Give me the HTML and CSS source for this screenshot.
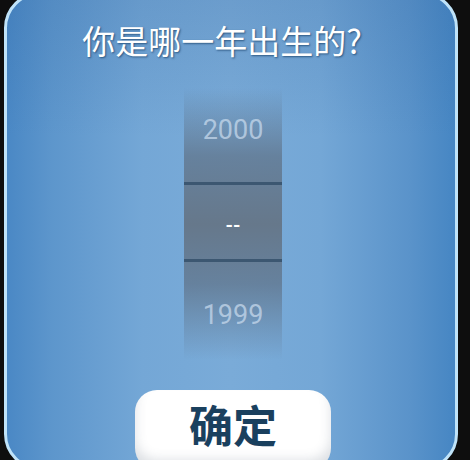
FILE: index.html
```html
<!DOCTYPE html>
<html lang="zh">
<head>
<meta charset="utf-8">
<title>出生年份</title>
<link rel="stylesheet" href="styles.css">
</head>
<body>
<div class="dialog">
  <h1 class="title">你是哪一年出生的?</h1>
  <div class="picker">
    <div class="item item-prev">2000</div>
    <div class="item item-current">--</div>
    <div class="item item-next">1999</div>
  </div>
  <button class="confirm">确定</button>
</div>
</body>
</html>
```

FILE: styles.css
```css
html, body {
  margin: 0;
  padding: 0;
  height: 100%;
  overflow: hidden;
  background: #0e0e0e;
}

.dialog {
  box-sizing: border-box;
  width: 454px;
  height: 478px;
  margin: -8px 0 0 4px;
  border: 3px solid #bfe3f9;
  border-radius: 36px;
  overflow: hidden;
  background:
    linear-gradient(180deg, rgba(40, 90, 150, 0.18) 0%, rgba(40, 90, 150, 0) 30%),
    linear-gradient(90deg, #4a88c5 0%, #5d96cc 10%, #74a7d6 30%, #7aabd8 50%, #74a7d6 70%, #5a93ca 90%, #4686c3 100%);
  display: flex;
  flex-direction: column;
  align-items: center;
  font-family: "Noto Sans CJK SC", "Noto Sans", sans-serif;
}

.title {
  margin: 22px 18px 0 0;
  font-size: 33px;
  font-weight: 400;
  line-height: 46px;
  color: #ffffff;
  text-shadow: 1px 1px 2px rgba(0, 40, 80, 0.6);
}

.picker {
  width: 98px;
  margin: 25px 0 0 4px;
  display: flex;
  flex-direction: column;
  background: linear-gradient(180deg,
    rgba(96, 116, 138, 0) 0%,
    rgba(96, 116, 138, 0.75) 25%,
    #66788b 50%,
    rgba(96, 116, 138, 0.75) 72%,
    rgba(96, 116, 138, 0) 100%);
  font-family: Roboto, "Noto Sans", sans-serif;
}

.item {
  display: flex;
  justify-content: center;
  align-items: center;
  font-size: 27px;
  color: rgba(205, 222, 240, 0.7);
}

.item-prev {
  height: 84px;
  padding-bottom: 10px;
}

.item-current {
  box-sizing: border-box;
  height: 80px;
  padding-top: 6px;
  border-top: 3px solid #3c5771;
  border-bottom: 3px solid #3c5771;
  color: #ffffff;
  font-size: 19px;
  font-weight: 700;
}

.item-next {
  height: 98px;
  box-sizing: border-box;
  padding-top: 8px;
}

.confirm {
  flex: none;
  margin: 30px 0 0 4px;
  width: 196px;
  height: 80px;
  border: none;
  border-radius: 22px;
  background: #ffffff;
  box-shadow: inset 0 -10px 12px rgba(60, 80, 100, 0.18);
  font-family: "Noto Sans CJK SC", sans-serif;
  font-size: 44px;
  font-weight: 700;
  color: #1a405e;
  line-height: 1;
  padding: 0 0 12px 0;
}
```
